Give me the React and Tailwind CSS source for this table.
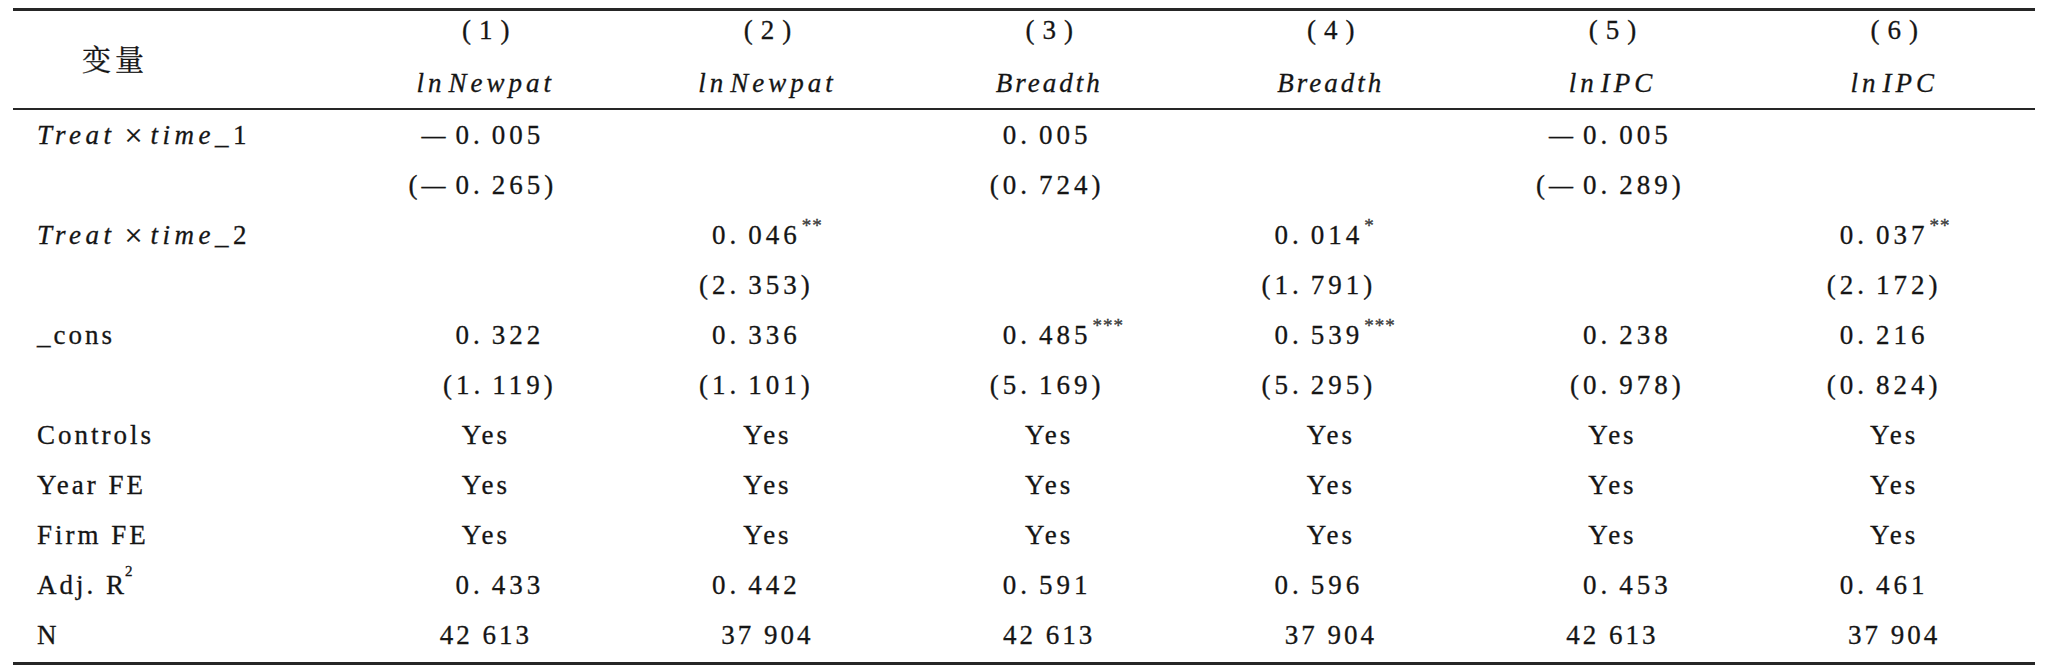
import React from "react";

const colOffset = ["pl-[28px]", "pr-[22px]", "pr-[4px]", "pr-[24px]", "pl-[30px]", "pr-[20px]"];

function Num({ text }) {
  let t = text;
  let stars = "";
  const m = t.match(/(\*+)$/);
  if (m) {
    stars = m[1];
    t = t.slice(0, -stars.length);
  }
  let open = "";
  let close = "";
  if (t.startsWith("(")) {
    open = "(";
    t = t.slice(1);
  }
  if (t.endsWith(")")) {
    close = ")";
    t = t.slice(0, -1);
  }
  let minus = false;
  if (t.startsWith("−")) {
    minus = true;
    t = t.slice(1);
  }
  const [a, b] = t.split(".");
  return (
    <span className={`relative inline-block whitespace-nowrap tracking-[4px] ${minus ? "-ml-[34px]" : ""}`}>
      {open && <span>{open}</span>}
      {minus && (
        <span className="inline-block w-[34px] text-left">
          <span className="inline-block text-[24px] tracking-normal -translate-y-[1px]">—</span>
        </span>
      )}
      <span>{a}</span>
      <span className="mr-[8px]">.</span>
      <span>{b}</span>
      {close && <span>{close}</span>}
      {stars && (
        <span className="absolute left-full top-[1px] ml-[1px] text-[19px] leading-none tracking-[1px] text-[#555]">
          {stars}
        </span>
      )}
    </span>
  );
}

function Cell({ value, col }) {
  if (!value) return <div />;
  const isDec = /\d\.\d/.test(value);
  return (
    <div className={`flex items-center justify-center ${isDec ? colOffset[col] : ""}`}>
      {isDec ? <Num text={value} /> : <span className="whitespace-nowrap">{value}</span>}
    </div>
  );
}

function TreatLabel({ n }) {
  return (
    <span className="flex items-center whitespace-nowrap tracking-[4.5px]">
      <i>Treat</i>
      <span className="ml-[9px] mr-[8px] not-italic tracking-normal text-[32px] leading-none">×</span>
      <i>time</i>
      <span>_{n}</span>
    </span>
  );
}

function HeaderVar({ ln, rest }) {
  return (
    <span className="whitespace-nowrap italic tracking-[4px]">
      <span className="mr-[3px]">{ln}</span>
      {rest}
    </span>
  );
}

const rows = [
  { label: <TreatLabel n={1} />, cells: ["−0.005", null, "0.005", null, "−0.005", null] },
  { label: null, cells: ["(−0.265)", null, "(0.724)", null, "(−0.289)", null] },
  { label: <TreatLabel n={2} />, cells: [null, "0.046**", null, "0.014*", null, "0.037**"] },
  { label: null, cells: [null, "(2.353)", null, "(1.791)", null, "(2.172)"] },
  { label: <span className="tracking-[3px]">_cons</span>, cells: ["0.322", "0.336", "0.485***", "0.539***", "0.238", "0.216"] },
  { label: null, cells: ["(1.119)", "(1.101)", "(5.169)", "(5.295)", "(0.978)", "(0.824)"] },
  { label: "Controls", cells: ["Yes", "Yes", "Yes", "Yes", "Yes", "Yes"] },
  { label: "Year FE", cells: ["Yes", "Yes", "Yes", "Yes", "Yes", "Yes"] },
  { label: "Firm FE", cells: ["Yes", "Yes", "Yes", "Yes", "Yes", "Yes"] },
  {
    label: (
      <span className="relative">
        Adj. R<span className="absolute -top-[1px] -ml-[2px] text-[15px] leading-none">2</span>
      </span>
    ),
    cells: ["0.433", "0.442", "0.591", "0.596", "0.453", "0.461"],
  },
  { label: "N", cells: ["42 613", "37 904", "42 613", "37 904", "42 613", "37 904"] },
];

const headers = [
  ["(1)", <HeaderVar ln="ln" rest="Newpat" />],
  ["(2)", <HeaderVar ln="ln" rest="Newpat" />],
  ["(3)", <span className="italic tracking-[3px]">Breadth</span>],
  ["(4)", <span className="italic tracking-[3px]">Breadth</span>],
  ["(5)", <HeaderVar ln="ln" rest="IPC" />],
  ["(6)", <HeaderVar ln="ln" rest="IPC" />],
];

export default function App() {
  return (
    <div className="w-[2048px] h-[672px] bg-white text-[#151515] text-[27px] tracking-[3px] font-['Liberation_Serif','Noto_Serif_CJK_SC',serif] [-webkit-text-stroke:0.3px_#151515]">
      <div className="ml-[13px] w-[2022px] pt-[8px]">
        <div className="border-t-[3px] border-b-2 border-[#262626]">
          <div className="grid grid-cols-[332px_repeat(6,1fr)] grid-rows-[38px_59px]">
            <div className="row-span-2 flex items-center pl-[69px] pb-[2px]">
              <span className="tracking-[4px] text-[29px] font-['Noto_Serif_CJK_SC','Noto_Sans_CJK_SC',serif]">变量</span>
            </div>
            {headers.map((h, i) => (
              <div key={"p" + i} className="flex items-center justify-center tracking-[8px]" style={{ gridColumn: i + 2, gridRow: 1 }}>
                <span className="pl-[8px]">{h[0]}</span>
              </div>
            ))}
            {headers.map((h, i) => (
              <div key={"v" + i} className="flex items-center justify-center pt-[10px]" style={{ gridColumn: i + 2, gridRow: 2 }}>
                {h[1]}
              </div>
            ))}
          </div>
        </div>
        <div className="border-b-[3px] border-[#262626] pb-[2px]">
          {rows.map((r, ri) => (
            <div key={ri} className="grid grid-cols-[332px_repeat(6,1fr)] h-[50px]">
              <div className="flex items-center pl-[24px] whitespace-nowrap">{r.label}</div>
              {r.cells.map((c, ci) => (
                <Cell key={ci} value={c} col={ci} />
              ))}
            </div>
          ))}
        </div>
      </div>
    </div>
  );
}
